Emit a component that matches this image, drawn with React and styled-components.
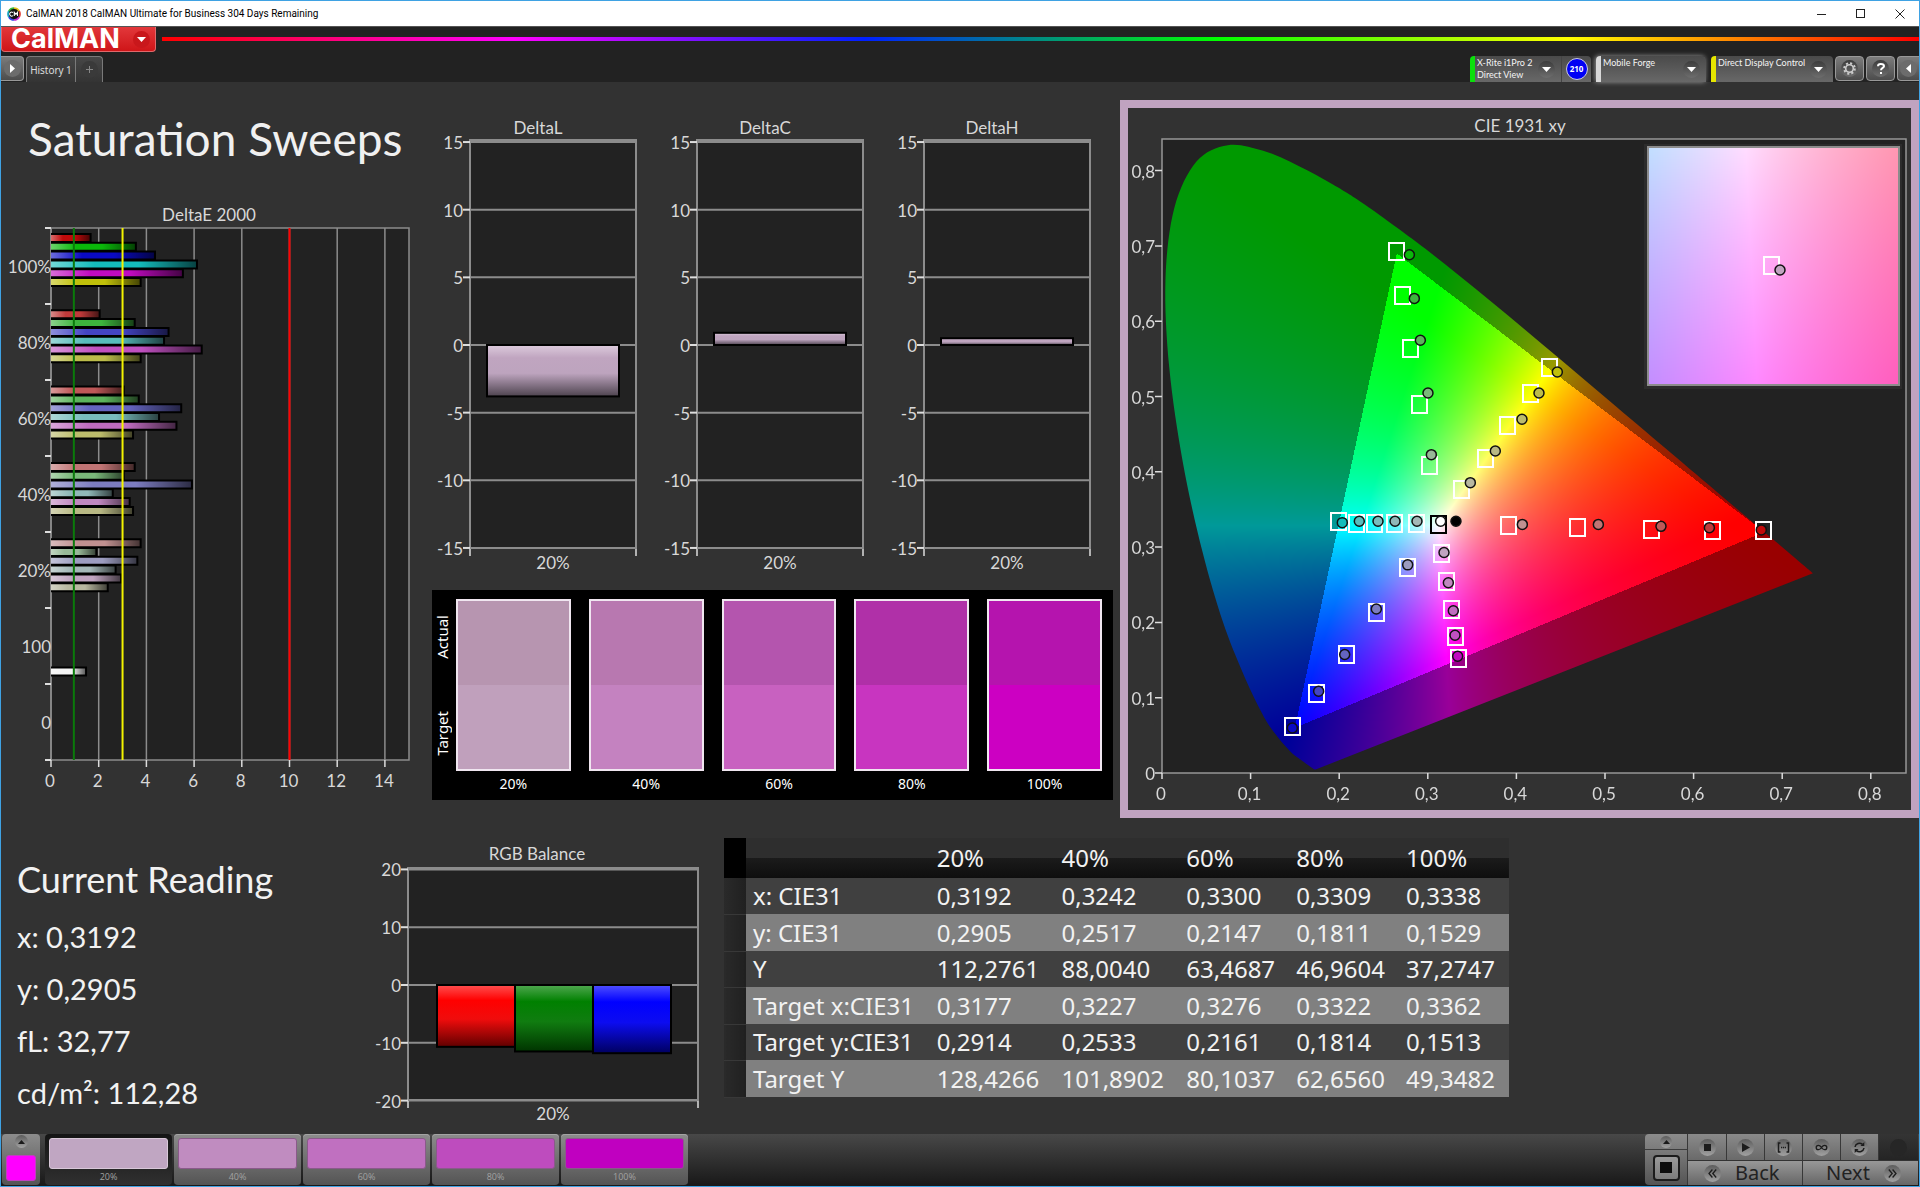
import React, { useLayoutEffect, useRef } from "react";
import styled, { createGlobalStyle } from "styled-components";

const humanist = `Lato, "Liberation Sans", sans-serif`;
const system = `"Noto Sans", "Open Sans", sans-serif`;

const GlobalStyle = createGlobalStyle`
  * { box-sizing: border-box; }
  body { margin: 0; background: #323232; font-family: ${humanist}; }
  button { font: inherit; color: inherit; border: 0; padding: 0; margin: 0; background: none; cursor: pointer; }
  h1, h2, p { margin: 0; font-weight: 400; }
`;

/* ---------- window chrome ---------- */

const Window = styled.div`
  min-height: 100vh;
  display: flex;
  flex-direction: column;
  border: 1px solid #3fa2e3;
  background: #323232;
  color: #f2f2f2;
`;

const TitleBar = styled.header`
  height: 25px;
  display: flex;
  align-items: center;
  padding-left: 6px;
  background: #fff;
  color: #000;
  font: 10px/16px Roboto, sans-serif;
`;

const TitleText = styled.span`
  flex: 1;
  padding-left: 5px;
`;

const CaptionButton = styled.button`
  width: 39px;
  height: 25px;
  display: grid;
  place-items: center;
`;

const BrandRow = styled.div`
  height: 30px;
  display: flex;
  align-items: flex-start;
  gap: 6px;
  background: #222;
  border-top: 1px solid #555;
`;

const BrandButton = styled.button`
  width: 155px;
  height: 25px;
  display: flex;
  align-items: center;
  justify-content: space-between;
  padding: 0 5px 0 9px;
  border: 1px solid #e0696b;
  border-top: 0;
  border-radius: 0 0 4px 4px;
  background: linear-gradient(#e2383b, #cf1518);
  color: #fff;
  font: 700 27px/24px Inter, sans-serif;
`;

const Rainbow = styled.div`
  flex: 1;
  height: 4px;
  margin-top: 10px;
  background: linear-gradient(90deg, #f00, #f0f 20%, #0020ff 40%, #0f0 60%, #ff0 80%, #f00);
`;

const ToolRow = styled.div`
  height: 26px;
  display: flex;
  align-items: flex-start;
  background: #222;
  font-size: 9px;
  line-height: 12px;
`;

const Spacer = styled.div`
  flex: 1;
`;

const Round = styled.span`
  flex: none;
  width: ${(p) => p.$size || 17}px;
  height: ${(p) => p.$size || 17}px;
  display: grid;
  place-items: center;
  border-radius: 50%;
  background: ${(p) => p.$bg || "linear-gradient(#3c3c3c, #6e6e6e)"};
`;

const ToolButton = styled.button`
  width: ${(p) => p.$width || 29}px;
  height: 25px;
  margin-left: ${(p) => (p.$open === "left" ? 0 : 2)}px;
  display: grid;
  place-items: center;
  border: 1px solid #999;
  border-radius: ${(p) => p.$radius || "4px"};
  border-left-width: ${(p) => (p.$open === "left" ? 0 : 1)}px;
  border-right-width: ${(p) => (p.$open === "right" ? 0 : 1)}px;
  background: linear-gradient(#7c7c7c, #4c4c4c);
`;

const TabStrip = styled.div`
  height: 26px;
  display: flex;
  margin-left: 2px;
  border: 1px solid #7a7a7a;
  border-bottom: 0;
  border-radius: 4px 4px 0 0;
  background: linear-gradient(#474747, #343434);
`;

const Tab = styled.button`
  width: ${(p) => p.$width}px;
  display: grid;
  place-items: center;
  border-left: ${(p) => (p.$divided ? "1px solid #7a7a7a" : "0")};
  color: #e4e4e4;
  font: 10px/12px "Open Sans", sans-serif;
`;

const Device = styled.div`
  width: ${(p) => p.$width}px;
  height: 26px;
  margin-left: 5px;
  display: flex;
  border-left: 5px solid ${(p) => p.$accent};
  border-radius: 4px 4px 0 0;
  background: linear-gradient(#4a4a4a, #686868);
  box-shadow: ${(p) => (p.$glow ? "-1px 0 5px #999" : "none")};
`;

const DeviceButton = styled.button`
  flex: 1;
  display: flex;
  align-items: flex-start;
  justify-content: space-between;
  padding: 1px 6px 0 2px;
  text-align: left;
  white-space: pre;
  color: #f4f4f4;
  & > ${Round} { margin-top: 4px; }
`;

const Badge = styled.button`
  width: 30px;
  display: grid;
  place-items: center;
  border-left: 1px solid #444;
  & > span {
    width: 22px;
    height: 22px;
    border: 1px solid #ccd;
    border-radius: 50%;
    background: #0000f4;
    color: #fff;
    font: 700 8px/20px "Open Sans", sans-serif;
  }
`;

/* ---------- page ---------- */

const Main = styled.main`
  flex: 1;
  padding-top: 18px;
`;

const TopGrid = styled.div`
  display: grid;
  grid-template-columns: 431fr 681fr 806fr;
  align-items: start;
`;

const BottomGrid = styled.div`
  display: grid;
  grid-template-columns: 370fr 353fr 785fr 410fr;
  align-items: start;
  padding-top: 20px;
`;

const Chart = styled.svg`
  display: block;
  width: 100%;
  height: auto;
  text { fill: #d8d8d8; font-family: ${humanist}; font-size: 17px; }
`;

const Heading = styled.h1`
  height: 100px;
  padding: 9px 0 0 27px;
  font-size: 46px;
  line-height: 60px;
  white-space: nowrap;
  color: #f0f0f0;
`;

const MiddleColumn = styled.div`
  padding-top: 15px;
`;

const DeltaRow = styled.div`
  display: grid;
  grid-template-columns: repeat(3, 1fr);
`;

const SwatchPanel = styled.div`
  height: 210px;
  display: flex;
  padding: 9px 11px 0 0;
  background: #000;
  color: #fff;
`;

const SideLabels = styled.div`
  width: 24px;
  height: 172px;
  padding-right: 4px;
  display: grid;
  grid-template-rows: 1fr 1fr;
  row-gap: 20px;
  place-items: center;
  font: 15px/16px ${system};
  & > span { writing-mode: vertical-rl; transform: rotate(180deg); }
`;

const SwatchRow = styled.div`
  flex: 1;
  display: grid;
  grid-template-columns: repeat(5, 1fr);
  column-gap: 18px;
`;

const Swatch = styled.div`
  text-align: center;
  font: 14px/26px ${system};
`;

const SwatchColor = styled.div`
  height: 172px;
  border: 2px solid #f0e6f0;
  background: linear-gradient(${(p) => p.$actual} 50%, ${(p) => p.$target} 50%);
`;

const CiePanel = styled.section`
  margin-left: 7px;
  border: 8px solid #c0a3c0;
`;

const PlotCanvas = styled.canvas`
  display: block;
  width: 100%;
  height: 100%;
`;

const Reading = styled.section`
  padding: 16px 0 0 16px;
`;

const ReadingTitle = styled.h2`
  margin-bottom: 6px;
  font-size: 36px;
  line-height: 51px;
`;

const ReadingValue = styled.p`
  font-size: 29px;
  line-height: 52px;
`;

const DataTable = styled.table`
  width: 100%;
  table-layout: fixed;
  border-collapse: collapse;
  font: 24px/36px ${system};
  color: #f2f2f2;
  white-space: nowrap;
  th, td { padding: 0 0 0 7px; text-align: left; font-weight: 400; }
`;

const HeadRow = styled.tr`
  height: 40px;
  background: linear-gradient(#2e2e2e 50%, #1b1b1b 50%, #0e0e0e);
  td:first-child { background: #000; }
`;

const DataRow = styled.tr`
  height: ${(p) => (p.$light ? 37 : 36)}px;
  background: ${(p) => (p.$light ? "#808080" : "#404040")};
  td:first-child { background: linear-gradient(90deg, #2a2a2a, #202020); border-bottom: 1px solid #383838; }
`;

/* ---------- footer ---------- */

const Footer = styled.footer`
  height: 52px;
  display: flex;
  padding: 0 1px 1px;
  background: linear-gradient(#484848, #181818);
`;

const metal = "linear-gradient(#8c8c8c, #545454)";

const CurrentColor = styled.button`
  width: 38px;
  margin-right: 5px;
  display: flex;
  flex-direction: column;
  align-items: center;
  justify-content: space-between;
  padding: 1px 0 4px;
  border-radius: 4px;
  background: ${metal};
  & > i { width: 30px; height: 26px; border: 1px solid #c040c0; border-radius: 3px; background: #f0f; }
`;

const LevelButton = styled.button`
  width: 127px;
  margin-right: 2px;
  padding: 4px 4px 0;
  border-radius: 4px;
  background: ${(p) => (p.$active ? "linear-gradient(#141414, #303030)" : metal)};
  box-shadow: ${(p) => (p.$active ? "none" : "inset 0 1px #a4a4a4")};
  color: #a2a2a2;
  text-align: center;
  font: 9px/16px "Open Sans", sans-serif;
  & > i { display: block; height: 31px; border: 1px solid ${(p) => p.$edge}; border-radius: 3px; background: ${(p) => p.$color}; }
`;

const Transport = styled.div`
  display: grid;
  grid-template-columns: 42px 39px repeat(4, 38px) 40px;
  grid-template-rows: 26px 25px;
`;

const StopColumn = styled.div`
  grid-row: 1 / 3;
  display: grid;
  grid-template-rows: 16px 1fr;
  border-radius: 4px 0 0 4px;
  background: ${metal};
`;

const PlainButton = styled.button`
  display: grid;
  place-items: center;
  border-bottom: ${(p) => (p.$line ? "1px solid #3c3c3c" : "0")};
`;

const BigStop = styled.span`
  width: 27px;
  height: 26px;
  display: grid;
  place-items: center;
  border: 2px solid #1c1c1c;
  border-radius: 4px;
  background: linear-gradient(#9a9a9a, #7c7c7c);
`;

const StepButton = styled.button`
  display: grid;
  place-items: center;
  border-left: 1px solid #383838;
  background: ${(p) => (p.$dim ? "linear-gradient(#343434, #242424)" : "linear-gradient(#8a8a8a, #6a6a6a)")};
`;

const PageButton = styled.button`
  grid-column: span 3;
  display: flex;
  align-items: center;
  gap: 14px;
  padding-left: ${(p) => p.$indent}px;
  border-left: 1px solid #383838;
  border-top: 1px solid #333;
  background: linear-gradient(#989898, #666);
  color: #222;
  font: 20px/22px ${system};
`;

/* ---------- icons ---------- */

const Down = () => (
  <svg width="9" height="5" aria-hidden="true"><path d="M0 0h9L4.500 5z" fill="#fff" /></svg>
);
const Up = () => (
  <svg width="7" height="4" aria-hidden="true"><path d="M0 4h7L3.500 0z" fill="#1a1a1a" /></svg>
);
const groove = "linear-gradient(#5c5c5c, #a2a2a2)";

const AppIcon = () => (
  <svg width="14" height="14" viewBox="0 0 14 14" aria-hidden="true">
    <circle cx="7" cy="7" r="5.900" fill="#111" />
    <g fill="none" strokeWidth="1.600">
      <path d="M7 1a6 6 0 0 1 5.200 3" stroke="#e8c21a" />
      <path d="M12.200 4a6 6 0 0 1 0 6" stroke="#e03a30" />
      <path d="M12.200 10A6 6 0 0 1 7 13" stroke="#c32bd0" />
      <path d="M7 13a6 6 0 0 1-5.200-3" stroke="#3346e6" />
      <path d="M1.800 10a6 6 0 0 1 0-6" stroke="#18a9c9" />
      <path d="M1.800 4A6 6 0 0 1 7 1" stroke="#34b83a" />
    </g>
    <path d="M6 5.600a2 2 0 1 0 0 3M7.300 9V5.400l1.600 2 1.600-2V9" fill="none" stroke="#fff" strokeWidth="1.100" />
  </svg>
);

const Gear = () => (
  <svg width="13" height="13" viewBox="0 0 13 13" aria-hidden="true">
    <circle cx="6.500" cy="6.500" r="5.300" fill="none" stroke="#ccc" strokeWidth="2" strokeDasharray="2.080 2.080" />
    <circle cx="6.500" cy="6.500" r="3.800" fill="none" stroke="#ccc" strokeWidth="1.600" />
  </svg>
);

const Chevrons = ({ flip }) => (
  <svg width="9" height="9" viewBox="0 0 9 9" fill="none" stroke="#1c1c1c" strokeWidth="1.300" aria-hidden="true">
    <path d={flip ? "M.8.5l3.400 4-3.400 4M4.600.5l3.400 4-3.400 4" : "M4.400.5L1 4.500l3.400 4M8.200.5l-3.400 4 3.400 4"} />
  </svg>
);

const StepIcon = ({ kind }) => (
  <svg width="13" height="13" viewBox="0 0 13 13" fill="none" stroke="#1c1c1c" strokeWidth="1.500" aria-hidden="true">
    {kind === "Stop" && <rect x="3" y="3" width="7" height="7" fill="#1c1c1c" stroke="none" />}
    {kind === "Play" && <path d="M3 2l8 4.500L3 11z" fill="#1c1c1c" stroke="none" />}
    {kind === "Range" && <path d="M3.500 2H1.500v9h2M9.500 2h2v9h-2M4 6.500h1.200M5.900 6.500h1.200M7.800 6.500h1.200" />}
    {kind === "Loop" && (
      <path d="M6.500 6.500C5.500 5 4.600 4.300 3.400 4.300a2.200 2.200 0 0 0 0 4.400c1.200 0 2.100-.7 3.100-2.200s1.900-2.200 3.100-2.200a2.200 2.200 0 0 1 0 4.400c-1.200 0-2.100-.7-3.100-2.200z" strokeWidth="1.300" />
    )}
    {kind === "Refresh" && (
      <>
        <path d="M2 6a4.500 4.500 0 0 1 7.500-2.600M11 7a4.500 4.500 0 0 1-7.500 2.600" />
        <path d="M11.300 1v4H7.500zM1.700 12V8h3.800z" fill="#1c1c1c" stroke="none" />
      </>
    )}
  </svg>
);

/* ---------- DeltaE 2000 ---------- */

const deltaE = [
  { label: "100%", values: [1.66, 3.56, 4.36, 6.12, 5.53, 3.76], colors: ["#c00a0a", "#0ab80a", "#0a0ac4", "#14bcbc", "#c00ac0", "#c0c00a"] },
  { label: "80%", values: [2.04, 3.51, 4.93, 4.74, 6.32, 3.76], colors: ["#bf3a3a", "#3db43d", "#4444c4", "#58bcbc", "#c050c0", "#bcbc4a"] },
  { label: "60%", values: [3.05, 3.68, 5.46, 4.53, 5.26, 3.44], colors: ["#bf5858", "#5cb45c", "#6464c0", "#78bcbc", "#c06cc0", "#bcbc6c"] },
  { label: "40%", values: [3.51, 3.05, 5.91, 2.59, 3.3, 3.44], colors: ["#c07474", "#7ab87a", "#7c7cc0", "#90b8b8", "#c088c0", "#b8b884"] },
  { label: "20%", values: [3.76, 1.9, 3.62, 2.71, 2.94, 2.38], colors: ["#c09090", "#98b898", "#9c9cc0", "#a4b8b8", "#c0a4c0", "#b8b8a0"] },
  { label: "100", values: [1.47], colors: ["#f4f4f4"], offset: 52 },
  { label: "0", values: [], colors: [] },
];

const DeltaEChart = () => {
  const left = 50, right = 408, top = 28, bottom = 560, unit = 23.85, step = 76;
  const x = (v) => left + v * unit;
  return (
    <Chart viewBox="0 0 431 610" role="img" aria-label="DeltaE 2000">
      <defs>
        <linearGradient id="barShade">
          <stop offset="0" stopColor="#fff" stopOpacity=".4" />
          <stop offset=".3" stopColor="#fff" stopOpacity="0" />
          <stop offset=".6" stopColor="#000" stopOpacity="0" />
          <stop offset="1" stopColor="#000" stopOpacity=".65" />
        </linearGradient>
      </defs>
      <text x="208" y="21" textAnchor="middle">DeltaE 2000</text>
      <rect x={left} y={top} width={right - left} height={bottom - top} fill="#222" stroke="#8c8c8c" strokeWidth="1.500" />
      {[0, 2, 4, 6, 8, 10, 12, 14].map((v) => (
        <g key={v}>
          <path d={`M${x(v)} ${top}V${bottom}`} stroke="#8c8c8c" strokeWidth="1.500" />
          <path d={`M${x(v)} ${bottom}v7`} stroke="#ddd" strokeWidth="1.500" />
          <text x={x(v) - 1} y="587" textAnchor="middle">{v}</text>
        </g>
      ))}
      {deltaE.map((group, g) => (
        <g key={group.label}>
          <path d={`M${left - 6} ${top + g * step}h6`} stroke="#ddd" strokeWidth="2" />
          <text x={left} y={top + g * step + 45} textAnchor="end">{group.label}</text>
          {group.values.map((v, i) => {
            const y = 34 + g * 76.3 + i * 8.8 + (group.offset || 0);
            return (
              <g key={i}>
                <rect x={left} y={y} width={v * unit} height="8" fill={group.colors[i]} />
                <rect x={left} y={y} width={v * unit} height="8" fill="url(#barShade)" />
                <path d={`M${left} ${y}h${v * unit}v8h${-v * unit}`} fill="none" stroke="#000" strokeWidth="2" />
              </g>
            );
          })}
        </g>
      ))}
      <path d={`M${left - 6} ${bottom}h6`} stroke="#ddd" strokeWidth="2" />
      <path d={`M${x(1) - 1} ${top}V${bottom}`} stroke="#0a7a0a" strokeWidth="2" />
      <path d={`M${x(3)} ${top}V${bottom}`} stroke="#f4f400" strokeWidth="2" />
      <path d={`M${x(10)} ${top}V${bottom}`} stroke="#f00" strokeWidth="2" />
    </Chart>
  );
};

/* ---------- DeltaL / DeltaC / DeltaH ---------- */

const DeltaChart = ({ title, value }) => {
  const left = 38, right = 204, zero = 230, unit = 13.53;
  const y = (v) => zero - v * unit;
  return (
    <Chart viewBox="0 0 227 475" role="img" aria-label={title}>
      <defs>
        <linearGradient id="mauve" x2="0" y2="1">
          <stop offset="0" stopColor="#dccbdc" />
          <stop offset=".25" stopColor="#c0a5c0" />
          <stop offset=".55" stopColor="#bda4be" />
          <stop offset="1" stopColor="#4d434e" />
        </linearGradient>
      </defs>
      <text x="106" y="19" textAnchor="middle">{title}</text>
      <rect x={left} y="25" width={right - left} height="408" fill="#222" stroke="#8c8c8c" strokeWidth="2" />
      {[15, 10, 5, 0, -5, -10, -15].map((v) => (
        <g key={v}>
          <path d={`M${left} ${y(v)}H${right}`} stroke="#8c8c8c" strokeWidth="2" />
          <path d={`M${left - 7} ${y(v)}h7`} stroke="#ddd" strokeWidth="2" />
          <text x={left - 7} y={y(v) + 7} textAnchor="end">{v}</text>
        </g>
      ))}
      <path d={`M${left} 434v7M${right} 434v7`} stroke="#ddd" strokeWidth="1.500" />
      <rect x="55" y={Math.min(zero, y(value))} width="132" height={Math.abs(value) * unit} fill="url(#mauve)" stroke="#000" strokeWidth="2" />
      <text x="121" y="454" textAnchor="middle">20%</text>
    </Chart>
  );
};

/* ---------- CIE 1931 xy ---------- */

const locus = [
  [0.1741, 0.005], [0.1714, 0.0051], [0.1644, 0.0109], [0.1566, 0.0177], [0.144, 0.0297], [0.1241, 0.0578],
  [0.1096, 0.0868], [0.0913, 0.1327], [0.0687, 0.2007], [0.0454, 0.295], [0.0235, 0.4127], [0.0082, 0.5384],
  [0.0039, 0.6548], [0.0139, 0.7502], [0.0389, 0.812], [0.0743, 0.8338], [0.1142, 0.8262], [0.1547, 0.8059],
  [0.1929, 0.7816], [0.2296, 0.7543], [0.3016, 0.6923], [0.3731, 0.6245], [0.4441, 0.5547], [0.5125, 0.4866],
  [0.5752, 0.4242], [0.627, 0.3725], [0.6658, 0.334], [0.6915, 0.3083], [0.719, 0.2809], [0.7347, 0.2653],
];
const gamut = [[0.68, 0.32], [0.265, 0.69], [0.15, 0.06]];

const cieColor = (x, y) => {
  const X = x / y, Z = (1 - x - y) / y;
  const rgb = [
    3.2406 * X - 1.5372 - 0.4986 * Z,
    -0.9689 * X + 1.8758 + 0.0415 * Z,
    0.0557 * X - 0.204 + 1.057 * Z,
  ].map((c) => Math.max(0, c));
  const max = Math.max(...rgb);
  return rgb.map((c) => (c / max) * 255);
};

const inGamut = (x, y) => {
  const side = ([ax, ay], [bx, by]) => (bx - ax) * (y - ay) - (by - ay) * (x - ax);
  return gamut.every((p, i) => side(p, gamut[(i + 1) % 3]) >= 0);
};

const ChromaCanvas = ({ width, height, x0, y0, unitX, unitY, clipped }) => {
  const ref = useRef(null);
  useLayoutEffect(() => {
    const ctx = ref.current.getContext("2d");
    const image = ctx.createImageData(width, height);
    for (let py = 0; py < height; py++) {
      for (let px = 0; px < width; px++) {
        const x = x0 + (px + 0.5) / unitX;
        const y = y0 + (height - py - 0.5) / unitY;
        const k = clipped && !inGamut(x, y) ? 0.6 : 1;
        const at = (py * width + px) * 4;
        cieColor(x, y).forEach((c, i) => { image.data[at + i] = c * k; });
        image.data[at + 3] = 255;
      }
    }
    ctx.putImageData(image, 0, 0);
    if (!clipped) return;
    const pts = locus.map(([x, y]) => [x * unitX, height - y * unitY]);
    ctx.beginPath();
    ctx.moveTo(...pts[0]);
    for (let i = 0; i < pts.length - 1; i++) {
      const a = pts[Math.max(0, i - 1)], b = pts[i], c = pts[i + 1], d = pts[Math.min(pts.length - 1, i + 2)];
      ctx.bezierCurveTo(b[0] + (c[0] - a[0]) / 6, b[1] + (c[1] - a[1]) / 6, c[0] - (d[0] - b[0]) / 6, c[1] - (d[1] - b[1]) / 6, c[0], c[1]);
    }
    ctx.closePath();
    ctx.globalCompositeOperation = "destination-in";
    ctx.fill();
  }, [width, height, x0, y0, unitX, unitY, clipped]);
  return <PlotCanvas ref={ref} width={width} height={height} />;
};

const targets = [
  [0.2649, 0.6937], [0.272, 0.6345], [0.281, 0.565], [0.2916, 0.4899], [0.3021, 0.4094],
  [0.1998, 0.3344], [0.2197, 0.3319], [0.2404, 0.3319], [0.2634, 0.3319], [0.2882, 0.3319],
  [0.316, 0.2923], [0.3217, 0.255], [0.3273, 0.2172], [0.3322, 0.1824], [0.3356, 0.1525],
  [0.2777, 0.2739], [0.2423, 0.2135], [0.2088, 0.1574], [0.1749, 0.1062], [0.1482, 0.0622],
  [0.339, 0.3765], [0.3653, 0.4179], [0.3905, 0.4625], [0.4168, 0.5046], [0.4379, 0.5394],
  [0.3913, 0.3295], [0.4699, 0.327], [0.5527, 0.3246], [0.6215, 0.3228], [0.6798, 0.3228],
];
const readings = [
  [0.2792, 0.6882, "#0ab80a"], [0.2848, 0.6303, "#3db43d"], [0.2916, 0.5747, "#5cb45c"], [0.3002, 0.5046, "#7ab87a"], [0.304, 0.4228, "#98b898"],
  [0.2035, 0.3325, "#14bcbc"], [0.2227, 0.3344, "#58bcbc"], [0.2438, 0.3344, "#78bcbc"], [0.263, 0.3344, "#90b8b8"], [0.2878, 0.3344, "#a4b8b8"],
  [0.3145, 0.3344, "#fff"], [0.3318, 0.3344, "#000"],
  [0.3183, 0.2929, "#c0a4c0"], [0.3232, 0.2526, "#c088c0"], [0.3288, 0.2154, "#c06cc0"], [0.3307, 0.183, "#c050c0"], [0.3337, 0.155, "#c00ac0"],
  [0.2773, 0.2764, "#9c9cc0"], [0.2419, 0.2178, "#7c7cc0"], [0.2062, 0.1574, "#6464c0"], [0.1768, 0.1086, "#4444c4"], [0.1471, 0.0598, "#0a0ac4"],
  [0.348, 0.3856, "#b8b8a0"], [0.3762, 0.4277, "#b8b884"], [0.4063, 0.4698, "#bcbc6c"], [0.4255, 0.5046, "#bcbc4a"], [0.4462, 0.5326, "#c0c00a"],
  [0.4067, 0.3301, "#c09090"], [0.4925, 0.3301, "#c07474"], [0.5632, 0.3276, "#bf5858"], [0.6178, 0.3258, "#bf3a3a"], [0.6764, 0.3228, "#c00a0a"],
];

const Target = ({ cx, cy, stroke = "#fff" }) => (
  <rect x={Math.round(cx) - 8} y={Math.round(cy) - 8} width="15" height="17" fill="none" stroke={stroke} strokeWidth="2" />
);

const CieChart = () => {
  const left = 34, bottom = 665, ux = 886, uy = 753;
  const X = (v) => left + v * ux;
  const Y = (v) => bottom - v * uy;
  const label = (v) => String(v).replace(".", ",");
  return (
    <Chart viewBox="0 0 783 702" role="img" aria-label="CIE 1931 xy">
      <text x="392" y="24" textAnchor="middle">CIE 1931 xy</text>
      <rect x={left} y="31" width="744" height="634" fill="#222" />
      <foreignObject x={left} y="31" width="744" height="634">
        <ChromaCanvas width={744} height={634} x0={0} y0={0} unitX={ux} unitY={uy} clipped />
      </foreignObject>
      <rect x={left} y="31" width="744" height="634" fill="none" stroke="#969696" strokeWidth="1.500" />
      {[0, 0.1, 0.2, 0.3, 0.4, 0.5, 0.6, 0.7, 0.8].map((v) => (
        <g key={v}>
          <path d={`M${X(v)} ${bottom}v6M${left} ${Y(v)}h-7`} stroke="#ddd" strokeWidth="1.500" />
          <text x={X(v) - 1} y="692" textAnchor="middle">{label(v)}</text>
          <text x={left - 7} y={Y(v) + 7} textAnchor="end">{label(v)}</text>
        </g>
      ))}
      {targets.map(([x, y], i) => <Target key={i} cx={X(x)} cy={Y(y)} />)}
      <Target cx={X(0.3126)} cy={Y(0.3301)} stroke="#000" />
      {readings.map(([x, y, fill], i) => (
        <circle key={i} cx={X(x)} cy={Y(y)} r="5" fill={fill} stroke="#111" strokeWidth="1.500" />
      ))}
      <rect x="516" y="36" width="258" height="245" fill="#2c2c2c" />
      <foreignObject x="520" y="39" width="251" height="238">
        <ChromaCanvas width={251} height={238} x0={0.2945} y0={0.268} unitX={5175} unitY={5174} />
      </foreignObject>
      <rect x="520" y="39" width="251" height="238" fill="none" stroke="#8c8c8c" strokeWidth="2" />
      <Target cx="644" cy="157" />
      <circle cx="652" cy="162" r="5" fill="#c0a4c0" stroke="#111" strokeWidth="1.500" />
    </Chart>
  );
};

/* ---------- RGB Balance ---------- */

const rgbBars = [
  { id: "r", x: 66, v: -10.7, stops: ["#ff5050", "#ff0000", "#f00c0c", "#600000"] },
  { id: "g", x: 144, v: -11.5, stops: ["#50a850", "#008000", "#107c10", "#003400"] },
  { id: "b", x: 222, v: -11.8, stops: ["#5050ff", "#0000ff", "#0c0cf0", "#000060"] },
];

const RgbChart = () => {
  const left = 37, right = 327, zero = 147, unit = 5.78;
  const y = (v) => zero - v * unit;
  return (
    <Chart viewBox="0 0 353 290" role="img" aria-label="RGB Balance">
      <defs>
        {rgbBars.map((b) => (
          <linearGradient key={b.id} id={`bar-${b.id}`} x2="0" y2="1">
            {b.stops.map((c, i) => <stop key={c} offset={[0, 0.25, 0.55, 1][i]} stopColor={c} />)}
          </linearGradient>
        ))}
      </defs>
      <text x="166" y="22" textAnchor="middle">RGB Balance</text>
      <rect x={left} y="30" width={right - left} height="232" fill="#222" stroke="#8c8c8c" strokeWidth="2" />
      {[20, 10, 0, -10, -20].map((v) => (
        <g key={v}>
          <path d={`M${left} ${y(v)}H${right}`} stroke="#8c8c8c" strokeWidth="2" />
          <path d={`M${left - 7} ${y(v)}h7`} stroke="#ddd" strokeWidth="2" />
          <text x={left - 7} y={y(v) + 7} textAnchor="end">{v}</text>
        </g>
      ))}
      <path d={`M${left} 263v7M${right} 263v7`} stroke="#ddd" strokeWidth="1.500" />
      {rgbBars.map((b) => (
        <rect key={b.id} x={b.x} y={zero} width="78" height={-b.v * unit} fill={`url(#bar-${b.id})`} stroke="#000" strokeWidth="2" />
      ))}
      <text x="182" y="282" textAnchor="middle">20%</text>
    </Chart>
  );
};

/* ---------- data ---------- */

const levels = [
  { label: "20%", actual: "#b795b0", target: "#c0a0bc", level: "#c0a6c2" },
  { label: "40%", actual: "#b878b0", target: "#c482c0", level: "#c08cc0" },
  { label: "60%", actual: "#b455ae", target: "#c861c0", level: "#c070c0" },
  { label: "80%", actual: "#b030a8", target: "#c835c0", level: "#be4cbe" },
  { label: "100%", actual: "#b514ae", target: "#cc00c2", level: "#c000c0" },
];

const rows = [
  ["x: CIE31", "0,3192", "0,3242", "0,3300", "0,3309", "0,3338"],
  ["y: CIE31", "0,2905", "0,2517", "0,2147", "0,1811", "0,1529"],
  ["Y", "112,2761", "88,0040", "63,4687", "46,9604", "37,2747"],
  ["Target x:CIE31", "0,3177", "0,3227", "0,3276", "0,3322", "0,3362"],
  ["Target y:CIE31", "0,2914", "0,2533", "0,2161", "0,1814", "0,1513"],
  ["Target Y", "128,4266", "101,8902", "80,1037", "62,6560", "49,3482"],
];

const Col = styled.col`
  width: ${(p) => p.$share}%;
`;

export default function App() {
  return (
    <>
      <GlobalStyle />
      <Window>
        <TitleBar>
          <AppIcon />
          <TitleText>CalMAN 2018 CalMAN Ultimate for Business 304 Days Remaining</TitleText>
          <CaptionButton aria-label="Minimize">
            <svg width="10" height="10"><path d="M0 5.500h9" stroke="#222" /></svg>
          </CaptionButton>
          <CaptionButton aria-label="Maximize">
            <svg width="10" height="10"><rect x=".5" y=".5" width="8" height="8" fill="none" stroke="#222" /></svg>
          </CaptionButton>
          <CaptionButton aria-label="Close">
            <svg width="10" height="10"><path d="M.5.5l9 9M9.500.5l-9 9" stroke="#222" /></svg>
          </CaptionButton>
        </TitleBar>
        <BrandRow>
          <BrandButton>
            CalMAN
            <Round $bg="#c9171b"><Down /></Round>
          </BrandButton>
          <Rainbow />
        </BrandRow>
        <ToolRow>
          <ToolButton $width={23} $radius="0 4px 4px 0" $open="left" aria-label="Expand sidebar">
            <Round $bg="#6c6c6c"><svg width="5" height="9"><path d="M0 0v9l5-4.500z" fill="#fff" /></svg></Round>
          </ToolButton>
          <TabStrip>
            <Tab $width={48}>History 1</Tab>
            <Tab $width={27} $divided aria-label="Add tab">
              <Round $bg="#3a3a3a"><svg width="7" height="7"><path d="M3.500 0v7M0 3.500h7" stroke="#888" /></svg></Round>
            </Tab>
          </TabStrip>
          <Spacer />
          <Device $width={121} $accent="#0be00b">
            <DeviceButton>{"X-Rite i1Pro 2\nDirect View"}<Round><Down /></Round></DeviceButton>
            <Badge><span>210</span></Badge>
          </Device>
          <Device $width={110} $accent="#d8d8d8" $glow>
            <DeviceButton>Mobile Forge<Round><Down /></Round></DeviceButton>
          </Device>
          <Device $width={122} $accent="#e6e600">
            <DeviceButton>Direct Display Control<Round><Down /></Round></DeviceButton>
          </Device>
          <ToolButton aria-label="Settings"><Round><Gear /></Round></ToolButton>
          <ToolButton aria-label="Help">
            <Round>
              <svg width="8" height="11" viewBox="0 0 8 11" fill="none" stroke="#fff" strokeWidth="2"><path d="M1 3.200C1 1.500 2.200 1 3.800 1S7 1.600 7 3.200C7 5 4 4.800 4 7.200M4 9v2" /></svg>
            </Round>
          </ToolButton>
          <ToolButton $width={22} $radius="4px 0 0 4px" $open="right" aria-label="Collapse">
            <Round $bg="#6c6c6c"><svg width="5" height="9"><path d="M5 0v9L0 4.500z" fill="#fff" /></svg></Round>
          </ToolButton>
        </ToolRow>

        <Main>
          <TopGrid>
            <div>
              <Heading>Saturation Sweeps</Heading>
              <DeltaEChart />
            </div>
            <MiddleColumn>
              <DeltaRow>
                <DeltaChart title="DeltaL" value={-3.8} />
                <DeltaChart title="DeltaC" value={0.9} />
                <DeltaChart title="DeltaH" value={0.5} />
              </DeltaRow>
              <SwatchPanel>
                <SideLabels><span>Actual</span><span>Target</span></SideLabels>
                <SwatchRow>
                  {levels.map((l) => (
                    <Swatch key={l.label}>
                      <SwatchColor $actual={l.actual} $target={l.target} />
                      {l.label}
                    </Swatch>
                  ))}
                </SwatchRow>
              </SwatchPanel>
            </MiddleColumn>
            <CiePanel><CieChart /></CiePanel>
          </TopGrid>

          <BottomGrid>
            <Reading>
              <ReadingTitle>Current Reading</ReadingTitle>
              <ReadingValue>x: 0,3192</ReadingValue>
              <ReadingValue>y: 0,2905</ReadingValue>
              <ReadingValue>fL: 32,77</ReadingValue>
              <ReadingValue>cd/m²: 112,28</ReadingValue>
            </Reading>
            <RgbChart />
            <DataTable>
              <colgroup>
                <Col $share={2.8} /><Col $share={23.4} /><Col $share={15.9} /><Col $share={15.9} />
                <Col $share={14} /><Col $share={14} /><Col $share={14} />
              </colgroup>
              <thead>
                <HeadRow>
                  <td /><td />
                  {levels.map((l) => <th key={l.label} scope="col">{l.label}</th>)}
                </HeadRow>
              </thead>
              <tbody>
                {rows.map(([name, ...cells], i) => (
                  <DataRow key={name} $light={i % 2 === 1}>
                    <td />
                    <th scope="row">{name}</th>
                    {cells.map((c) => <td key={c}>{c}</td>)}
                  </DataRow>
                ))}
              </tbody>
            </DataTable>
          </BottomGrid>
        </Main>

        <Footer>
          <CurrentColor aria-label="Current colour">
            <Round $size={13} $bg={groove}><Up /></Round>
            <i />
          </CurrentColor>
          {levels.map((l, i) => (
            <LevelButton key={l.label} $active={i === 0} $color={l.level} $edge={i === 0 ? "#d8c8d8" : "#8a5a8a"}>
              <i />
              {l.label}
            </LevelButton>
          ))}
          <Spacer />
          <Transport>
            <StopColumn>
              <PlainButton $line aria-label="More"><Round $size={12} $bg={groove}><Up /></Round></PlainButton>
              <PlainButton aria-label="Stop reading">
                <BigStop><svg width="12" height="11"><rect width="12" height="11" fill="#0c0c0c" /></svg></BigStop>
              </PlainButton>
            </StopColumn>
            {["Stop", "Play", "Range", "Loop", "Refresh"].map((kind) => (
              <StepButton key={kind} aria-label={kind}><Round $bg={groove}><StepIcon kind={kind} /></Round></StepButton>
            ))}
            <StepButton $dim aria-label="Record"><Round $bg="#262626" /></StepButton>
            <PageButton $indent={16}><Round $bg={groove}><Chevrons /></Round>Back</PageButton>
            <PageButton $indent={23}>Next<Round $bg={groove}><Chevrons flip /></Round></PageButton>
          </Transport>
        </Footer>
      </Window>
    </>
  );
}
